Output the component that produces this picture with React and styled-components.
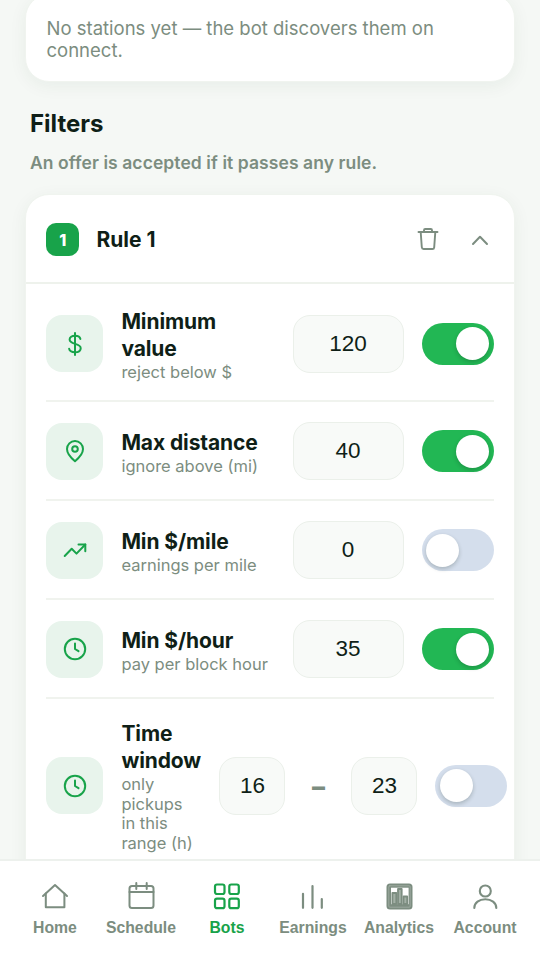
import React from 'react';
import styled, { createGlobalStyle, css } from 'styled-components';

const GlobalStyle = createGlobalStyle`
  * {
    box-sizing: border-box;
  }

  body {
    margin: 0;
    background: #f5f8f5;
    color: #0f1f17;
    font-family: Inter, 'Noto Sans', sans-serif;
  }

  button {
    border: 0;
    padding: 0;
    background: none;
    font: inherit;
    color: inherit;
  }
`;

// --- Icons ---

const Svg = styled.svg`
  display: block;
  flex-shrink: 0;
  fill: none;
  stroke: currentColor;
  stroke-width: ${({ $stroke }) => $stroke || 2};
  stroke-linecap: round;
  stroke-linejoin: round;
`;

const Icon = ({ size = 24, box = 24, stroke, children }) => (
  <Svg width={size} height={size} viewBox={`0 0 ${box} ${box}`} $stroke={stroke}>
    {children}
  </Svg>
);

const DollarIcon = () => (
  <Icon>
    <path d="M12 1v22" />
    <path d="M17.4 7C17 4.900 15 3.700 12 3.700c-3.200 0-5.400 1.500-5.400 3.900 0 5.600 11.100 3 11.100 8.600 0 2.500-2.300 4.100-5.700 4.100-3.300 0-5.500-1.300-5.900-3.600" />
  </Icon>
);

const PinIcon = () => (
  <Icon>
    <path d="M12 22.200s8-6.600 8-12.200a8 8 0 0 0-16 0c0 5.600 8 12.200 8 12.200z" />
    <circle cx="12" cy="10" r="2.800" />
  </Icon>
);

const TrendIcon = () => (
  <Icon>
    <path d="M1.700 18l7-7.200 4.800 4.800L22.300 6.500" />
    <path d="M15.500 6.500h6.800v6.800" />
  </Icon>
);

const ClockIcon = () => (
  <Icon>
    <circle cx="12" cy="12" r="10.200" />
    <path d="M12 6.500V12l3.500 2.200" />
  </Icon>
);

const TrashIcon = () => (
  <Icon stroke={1.9}>
    <path d="M2.500 5h19M8 5V3.200C8 2.500 8.400 2 9.200 2h5.600c.8 0 1.200.5 1.200 1.200V5" />
    <path d="M4.700 5l1.100 15.300c.1 1.100.8 1.700 1.800 1.700h8.800c1 0 1.700-.6 1.800-1.700L19.300 5" />
  </Icon>
);

const ChevronIcon = () => (
  <Icon>
    <path d="M5 17l7-7.300 7 7.300" />
  </Icon>
);

const HomeIcon = () => (
  <Icon size={28} box={28}>
    <path d="M2 14L14 3l12 11" />
    <path d="M4.800 11.500V25.300h18.600V11.500" />
  </Icon>
);

const CalendarIcon = () => (
  <Icon size={28} box={28}>
    <rect x="2.500" y="4" width="24" height="22" rx="2.500" />
    <path d="M2.500 10h24M9.300 1v6M19.700 1v6" />
  </Icon>
);

const GridIcon = () => (
  <Icon size={28} box={28} stroke={2.2}>
    <rect x="2" y="2.500" width="9.500" height="9.500" rx="2" />
    <rect x="16.300" y="2.500" width="9.500" height="9.500" rx="2" />
    <rect x="2" y="16.700" width="9.500" height="9.500" rx="2" />
    <rect x="16.300" y="16.700" width="9.500" height="9.500" rx="2" />
  </Icon>
);

const BarsIcon = () => (
  <Icon size={28} box={28} stroke={2.2}>
    <path d="M4 11.800v14M13.500 4v21.800M22.800 17v8.800" />
  </Icon>
);

const AnalyticsIcon = () => (
  <Icon size={28} box={28}>
    <rect x="1.500" y="1.500" width="26" height="26" rx="3.500" fill="currentColor" stroke="none" />
    <rect x="3.800" y="3.800" width="21.400" height="21.400" rx="1" stroke="#a3b0a6" strokeWidth=".8" />
    <rect x="6" y="5.700" width="17.600" height="16.500" fill="#fff" stroke="none" />
    <g fill="#a3b0a6" strokeWidth="1.800">
      <rect x="7.400" y="11" width="3.900" height="11" />
      <rect x="13" y="7" width="3.700" height="15" />
      <rect x="18.500" y="14.500" width="3.700" height="7.500" />
    </g>
  </Icon>
);

const UserIcon = () => (
  <Icon size={28} box={28} stroke={2.1}>
    <circle cx="14.300" cy="9" r="5.500" />
    <path d="M3.300 26c0-5.300 4.900-8.700 11-8.700s11 3.400 11 8.700" />
  </Icon>
);

// --- Layout ---

const Screen = styled.div`
  display: flex;
  flex-direction: column;
  height: 960px;
  overflow: hidden;
`;

const Content = styled.main`
  flex: 1;
  min-height: 0;
  overflow: hidden;
  padding: 0 25px;
`;

const cardStyle = css`
  background: #fff;
  border: 1px solid #f0f4ef;
  border-radius: 24px;
  box-shadow: 0 4px 18px rgba(16, 60, 36, 0.06);
`;

const StationsCard = styled.section`
  ${cardStyle}
  margin-top: -6px;
  height: 88px;
  padding: 22px 20.5px 0;
  color: #7c8d80;
  font-size: 18.5px;
  line-height: 22px;
`;

const SectionTitle = styled.h2`
  margin: 27px 5px 0;
  font-size: 24px;
  font-weight: 700;
  line-height: 30px;
`;

const SectionHint = styled.p`
  margin: 12px 5px 19px;
  color: #7c8d80;
  font-size: 17.5px;
  font-weight: 600;
  line-height: 24px;
  letter-spacing: 0.08px;
`;

const RuleCard = styled.section`
  ${cardStyle}
  height: 900px;
`;

const RuleHeader = styled.header`
  display: flex;
  align-items: center;
  height: 89px;
  padding: 1px 22px 0 20.4px;
  border-bottom: 2px solid #eef2ec;
`;

const RuleNumber = styled.span`
  display: grid;
  place-items: center;
  width: 33px;
  height: 33px;
  padding-top: 2px;
  margin-right: 17px;
  border-radius: 10px;
  background: #18a34a;
  color: #fff;
  font-size: 16px;
  font-weight: 800;
`;

const RuleName = styled.h3`
  flex: 1;
  margin: 0;
  font-size: 21px;
  font-weight: 700;
`;

const HeaderAction = styled.button`
  margin-left: 28px;
  color: #7c8d80;
`;

const Rows = styled.div`
  padding: 2px 20.5px 0 20.4px;
`;

const Row = styled.div`
  display: flex;
  align-items: center;
  gap: 18px;
  padding: 20.5px 0 18.5px;
  border-bottom: 2px solid #f0f3ee;
`;

const IconTile = styled.span`
  display: grid;
  place-items: center;
  flex-shrink: 0;
  width: 57px;
  height: 57px;
  border-radius: 16px;
  background: #e8f4ec;
  color: #18a34a;
`;

const RowText = styled.div`
  flex: ${({ $narrow }) => ($narrow ? '0 0 80px' : '1')};
  min-width: 0;
  margin: ${({ $narrow }) => ($narrow ? '1px 0 -1px' : '1.5px 0 -1.5px')};
`;

const RowTitle = styled.div`
  width: ${({ $wrap }) => ($wrap ? '110px' : 'auto')};
  font-size: 21px;
  font-weight: 700;
  line-height: 27px;
  letter-spacing: -0.1px;
`;

const RowHint = styled.div`
  width: ${({ $wrap }) => ($wrap ? '76px' : 'auto')};
  margin-top: 1px;
  color: #7c8d80;
  font-size: 16.5px;
  line-height: 19.5px;
  white-space: ${({ $wrap }) => ($wrap ? 'normal' : 'nowrap')};
`;

const NumberInput = styled.input`
  flex-shrink: 0;
  width: ${({ $small }) => ($small ? '66px' : '111px')};
  height: 58px;
  padding: 0;
  border: 1px solid #ebf0ea;
  border-radius: 17px;
  background: #f8faf8;
  color: #0f1f17;
  font-family: 'Liberation Sans', Arial, sans-serif;
  font-size: 22.5px;
  text-align: center;
  outline: none;
`;

const Dash = styled.span`
  flex-shrink: 0;
  width: 30px;
  padding-top: 2px;
  color: #7c8d80;
  font-size: 26px;
  font-weight: 800;
  text-align: center;
`;

const Switch = styled.button`
  display: flex;
  align-items: center;
  justify-content: ${({ $on }) => ($on ? 'flex-end' : 'flex-start')};
  flex-shrink: 0;
  width: 72px;
  height: 42px;
  padding: 0 4.5px;
  border-radius: 21px;
  background: ${({ $on }) => ($on ? '#22b754' : '#d4deec')};
`;

const Knob = styled.span`
  width: 33px;
  height: 33px;
  border-radius: 50%;
  background: #fff;
  box-shadow: 0 2px 4px rgba(15, 31, 23, 0.22);
`;

const Nav = styled.nav`
  display: grid;
  grid-template-columns: repeat(6, 86px);
  justify-content: center;
  align-content: start;
  flex-shrink: 0;
  height: 101px;
  padding-top: 21px;
  border-top: 2px solid #edf1ed;
  background: #fff;
`;

const NavItem = styled.a`
  display: flex;
  flex-direction: column;
  align-items: center;
  gap: 9px;
  color: ${({ $active }) => ($active ? '#18a34a' : '#7c8d80')};
  font-family: 'Liberation Sans', Arial, sans-serif;
  font-size: 15.75px;
  font-weight: 700;
  line-height: 18px;
`;

// --- Data ---

const filters = [
  { title: 'Minimum value', hint: 'reject below $', icon: DollarIcon, values: [120], on: true, wrapTitle: true },
  { title: 'Max distance', hint: 'ignore above (mi)', icon: PinIcon, values: [40], on: true },
  { title: 'Min $/mile', hint: 'earnings per mile', icon: TrendIcon, values: [0], on: false },
  { title: 'Min $/hour', hint: 'pay per block hour', icon: ClockIcon, values: [35], on: true },
  { title: 'Time window', hint: 'only pickups in this range (h)', icon: ClockIcon, values: [16, 23], on: false },
];

const tabs = [
  { label: 'Home', icon: HomeIcon },
  { label: 'Schedule', icon: CalendarIcon },
  { label: 'Bots', icon: GridIcon, active: true },
  { label: 'Earnings', icon: BarsIcon },
  { label: 'Analytics', icon: AnalyticsIcon },
  { label: 'Account', icon: UserIcon },
];

// --- Components ---

const FilterRow = ({ title, hint, icon: RowIcon, values, on, wrapTitle }) => {
  const isRange = values.length > 1;

  return (
    <Row>
      <IconTile>
        <RowIcon />
      </IconTile>
      <RowText $narrow={isRange}>
        <RowTitle $wrap={wrapTitle}>{title}</RowTitle>
        <RowHint $wrap={isRange}>{hint}</RowHint>
      </RowText>
      <NumberInput $small={isRange} defaultValue={values[0]} />
      {isRange && <Dash>–</Dash>}
      {isRange && <NumberInput $small defaultValue={values[1]} />}
      <Switch $on={on}>
        <Knob />
      </Switch>
    </Row>
  );
};

export default function App() {
  return (
    <Screen>
      <GlobalStyle />
      <Content>
        <StationsCard>No stations yet — the bot discovers them on connect.</StationsCard>
        <SectionTitle>Filters</SectionTitle>
        <SectionHint>An offer is accepted if it passes any rule.</SectionHint>
        <RuleCard>
          <RuleHeader>
            <RuleNumber>1</RuleNumber>
            <RuleName>Rule 1</RuleName>
            <HeaderAction>
              <TrashIcon />
            </HeaderAction>
            <HeaderAction>
              <ChevronIcon />
            </HeaderAction>
          </RuleHeader>
          <Rows>
            {filters.map((filter) => (
              <FilterRow key={filter.title} {...filter} />
            ))}
          </Rows>
        </RuleCard>
      </Content>
      <Nav>
        {tabs.map(({ label, icon: TabIcon, active }) => (
          <NavItem key={label} $active={active}>
            <TabIcon />
            {label}
          </NavItem>
        ))}
      </Nav>
    </Screen>
  );
}
